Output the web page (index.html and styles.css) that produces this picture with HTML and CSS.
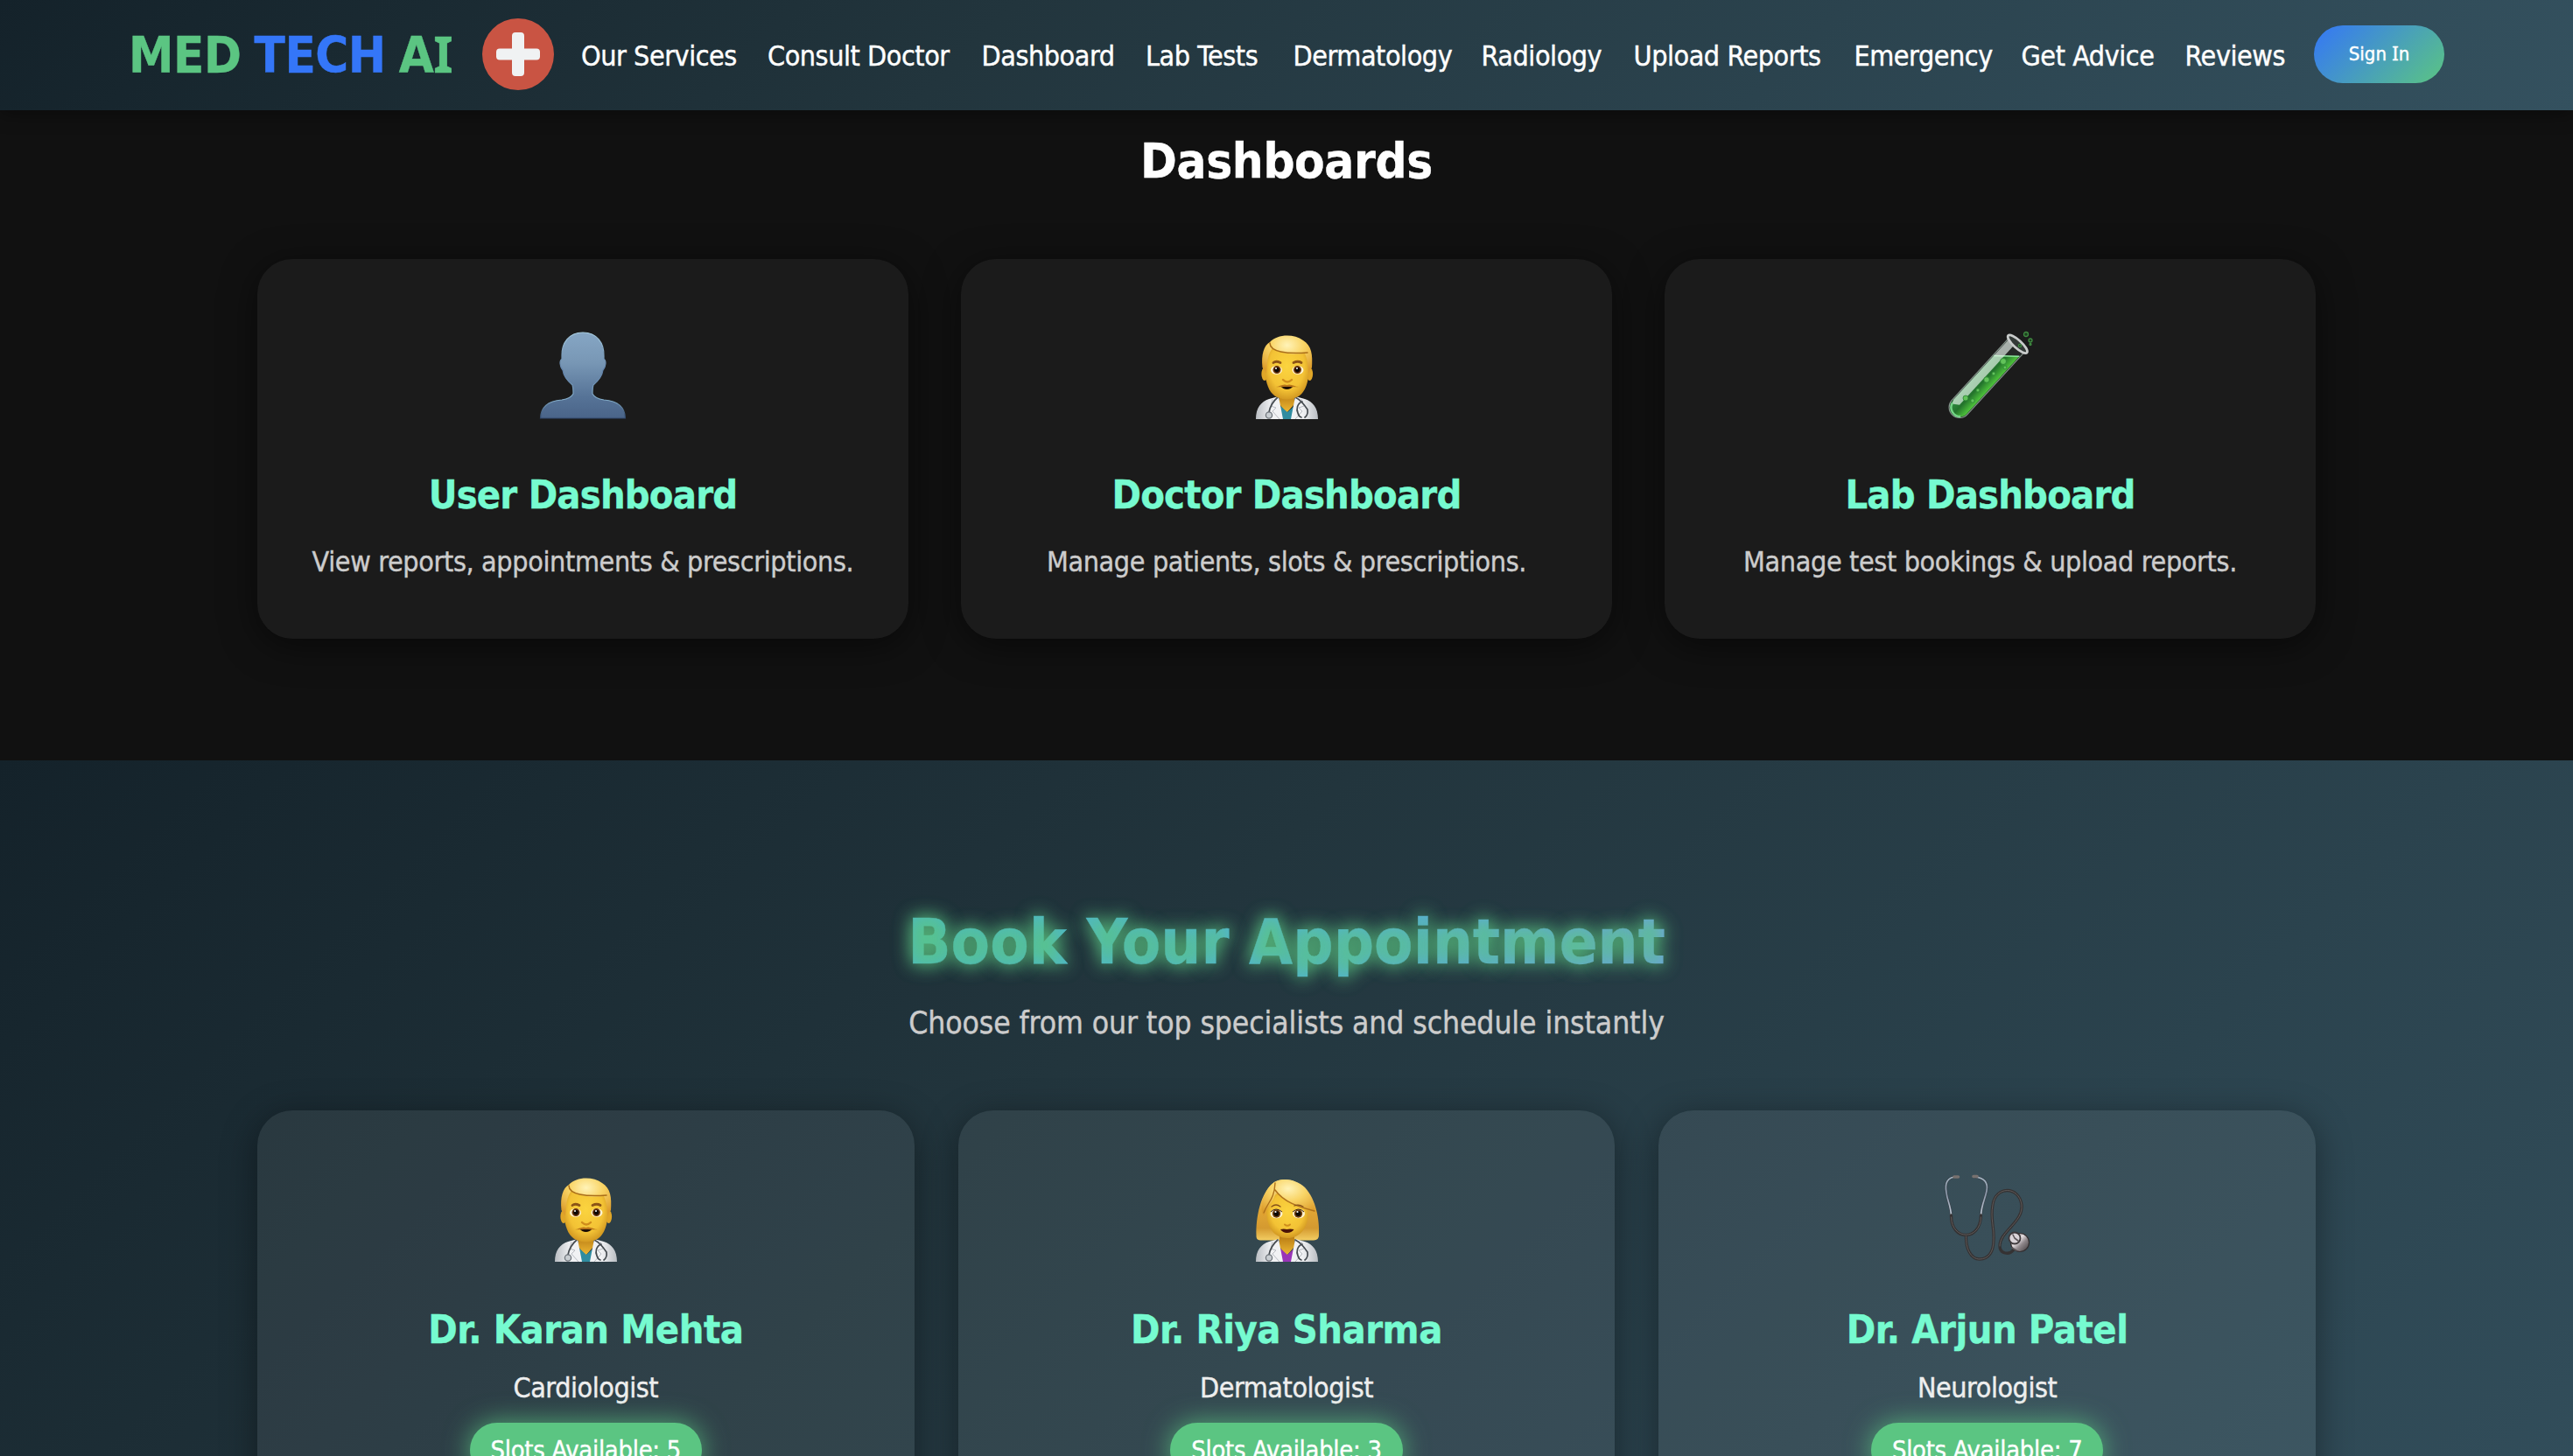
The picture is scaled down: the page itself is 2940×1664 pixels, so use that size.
FILE: index.html
```
<!DOCTYPE html>
<html lang="en">
<head>
<meta charset="utf-8">
<title>Med Tech AI</title>
<link rel="stylesheet" href="styles.css">
</head>
<body>
<svg class="defs" width="0" height="0" aria-hidden="true">
  <defs>
    <linearGradient id="bust" x1="0" y1="0" x2="0" y2="1"><stop offset="0" stop-color="#86a6c4"/><stop offset=".35" stop-color="#7897b5"/><stop offset=".75" stop-color="#567397"/><stop offset="1" stop-color="#4a6488"/></linearGradient>
    <linearGradient id="bustRim" x1="0" y1="0" x2="0" y2="1"><stop offset="0" stop-color="#a9cfe2"/><stop offset=".45" stop-color="#5f7fa6"/><stop offset=".78" stop-color="#86b0cc"/><stop offset="1" stop-color="#2f4669"/></linearGradient>
    <radialGradient id="skin" cx=".5" cy=".45" r=".6"><stop offset="0" stop-color="#fbd43f"/><stop offset=".65" stop-color="#f3c235"/><stop offset="1" stop-color="#c98d1c"/></radialGradient>
    <radialGradient id="hair" cx=".5" cy=".25" r=".75"><stop offset="0" stop-color="#fff3b8"/><stop offset=".45" stop-color="#f9d465"/><stop offset="1" stop-color="#dd9d2c"/></radialGradient>
    <linearGradient id="bob" x1="0" y1="0" x2="0" y2="1"><stop offset="0" stop-color="#fbe08a"/><stop offset=".5" stop-color="#e2a634"/><stop offset=".8" stop-color="#d49a30"/><stop offset="1" stop-color="#f3cd62"/></linearGradient>
    <linearGradient id="neck" x1="0" y1="0" x2="0" y2="1"><stop offset="0" stop-color="#b97c14"/><stop offset="1" stop-color="#f0bb35"/></linearGradient>
    <linearGradient id="coat" gradientUnits="userSpaceOnUse" x1="15" y1="0" x2="86" y2="0"><stop offset="0" stop-color="#b9bdc2"/><stop offset=".25" stop-color="#f1f2f4"/><stop offset=".75" stop-color="#f1f2f4"/><stop offset="1" stop-color="#b9bdc2"/></linearGradient>
    <linearGradient id="liquid" x1="0" y1="0" x2="1" y2="0"><stop offset="0" stop-color="#2f8f43"/><stop offset=".5" stop-color="#23732c"/><stop offset="1" stop-color="#4fc53c"/></linearGradient>
    <linearGradient id="tubing" x1="0" y1="0" x2="0" y2="1"><stop offset="0" stop-color="#a9bac8"/><stop offset=".45" stop-color="#8d99ab"/><stop offset="1" stop-color="#c4ccd8"/></linearGradient>
    <linearGradient id="steel" x1="0" y1="0" x2="1" y2="1"><stop offset="0" stop-color="#7b7478"/><stop offset=".4" stop-color="#e3dcdf"/><stop offset=".6" stop-color="#8f878b"/><stop offset="1" stop-color="#3a3436"/></linearGradient>
    <symbol id="doctor-body" viewBox="0 0 100 100">
      <path d="M42 70H59V82L50 92L42 82Z" fill="url(#neck)"/>
      <path d="M42 83L51 91L60 83L62 99H38Z" class="shirt"/>
      <path d="M15 99C15 86 21 79 30 76L41 73L46 99ZM86 99C86 86 80 79 71 76L60 73L55 99Z" fill="url(#coat)"/>
      <path d="M34 76L32 84L38 86L34 90L42 99M67 76L70 84L64 86L68 90L60 99" fill="none" stroke="#b9bcc2" stroke-width="1"/>
      <path d="M40 74C33 80 31 86 30 91M60 74C66 77 69 81 74 88Q75 94 71 97M68 79C62 81 61 88 63 92Q64 96 67 97" fill="none" stroke="#454b50" stroke-width="1.7" stroke-linecap="round"/>
      <circle cx="30" cy="94.5" r="3.6" fill="#c9ced2" stroke="#70767c" stroke-width="1.3"/>
    </symbol>
    <symbol id="doctor-man" viewBox="0 0 100 100">
      <g class="shirt-teal"><use href="#doctor-body"/></g>
      <ellipse cx="25" cy="47.5" rx="3.6" ry="7.5" fill="#e0a628"/><ellipse cx="76.5" cy="47.5" rx="3.6" ry="7.5" fill="#e0a628"/>
      <path d="M25 30C25 14 36 8 51 8C67 8 76 16 76 32C76 54 74 76 50.500 76.500C27 76 25 54 25 30Z" fill="url(#skin)"/>
      <path d="M22.500 40C21 25 24 15 31 11C39 2 58 1 69 9C79 15 80 26 79 40L75 47C75 38 74 31 71 24C58 26 42 24 34 18C28 25 28 36 27 47Z" fill="url(#hair)"/>
      <path d="M31 12C31 22 50 25 74 23" fill="none" stroke="#a96d18" stroke-width="1.5" stroke-linecap="round"/>
      <path d="M35 34.500Q38 32 43 34.500M58 34.500Q63 32 67 34.500" fill="none" stroke="#8c5416" stroke-width="2.8" stroke-linecap="round"/>
      <g fill="#fff3d2"><ellipse cx="38.5" cy="43" rx="6.5" ry="4.8"/><ellipse cx="63" cy="43" rx="6.5" ry="4.8"/></g>
      <g fill="#6a340c"><circle cx="39" cy="42.6" r="4.5"/><circle cx="62.5" cy="42.6" r="4.5"/></g>
      <g fill="#0e0805"><circle cx="39" cy="42.6" r="2.8"/><circle cx="62.5" cy="42.6" r="2.8"/></g>
      <g fill="#fff"><circle cx="38" cy="41" r="1"/><circle cx="62" cy="41" r="1"/></g>
      <path d="M46 54Q51 59 56 54" fill="none" stroke="#cf8d1c" stroke-width="2.4" stroke-linecap="round"/>
      <path d="M43 61Q50 63 58 61Q55 65 50.500 65Q46 65 43 61Z" fill="#1b0d05"/>
      <path d="M38 62C42 62 46 58 50.500 60C55 58 59 62 64 62C59 63 55 61.500 50.500 62C46 61.500 42 63 38 62Z" fill="#b8741a"/>
    </symbol>
    <symbol id="doctor-woman" viewBox="0 0 100 100">
      <path d="M36 8C46 2 62 5 71 14C84 28 88 52 87 69Q87 74 81 74.500H20Q15 74 15.500 69C15 48 20 20 36 8Z" fill="url(#bob)"/>
      <g class="shirt-purple"><use href="#doctor-body"/></g>
      <path d="M27 40C29 28 40 17 51 17C64 19 74 30 75 42C75 62 64 72 51 72C36 72 27 60 27 40Z" fill="url(#skin)"/>
      <path d="M36 8C48 1 66 7 74 19C80 28 83 36 82 42C66 38 47 32 37 17C38 28 29 34 24 47C18 38 24 16 36 8Z" fill="url(#hair)"/>
      <path d="M37 9C36 28 29 30 24 43M37 17C47 31 63 36 82 41" fill="none" stroke="#ae711b" stroke-width="1.4" stroke-linecap="round"/>
      <path d="M33 36Q38 32 43 36M59 35Q64 33 69 36" fill="none" stroke="#84501a" stroke-width="1.3" stroke-linecap="round"/>
      <g fill="#fff3d2"><ellipse cx="38.5" cy="44" rx="7" ry="5.3"/><ellipse cx="64" cy="44" rx="7" ry="5.3"/></g>
      <g fill="#71400f"><circle cx="38.5" cy="44" r="4.7"/><circle cx="63.5" cy="44" r="4.7"/></g>
      <g fill="#0e0805"><circle cx="38.5" cy="44" r="3"/><circle cx="63.5" cy="44" r="3"/></g>
      <path d="M32 42Q38 36 45 42M57 42Q64 36 70 42" fill="none" stroke="#3c220e" stroke-width="1"/>
      <g fill="#fff"><circle cx="37.5" cy="42" r="1.1"/><circle cx="62.5" cy="42" r="1.1"/></g>
      <path d="M48 56.500Q51 59 54 56.500" fill="none" stroke="#cf8d1c" stroke-width="2" stroke-linecap="round"/>
      <path d="M43 62Q47 61 50.500 62Q54 61 58.500 62Q56 66 50.500 66Q46 66 43 62Z" fill="#4a1308"/>
    </symbol>
  </defs>
</svg>

<header class="navbar">
  <div class="brand">
    <span class="brand-name">MED <span class="brand-tech">TECH</span> A<span class="serif-i">I</span></span>
    <svg class="brand-mark" viewBox="0 0 82 82" aria-hidden="true">
      <circle cx="41" cy="41" r="41" fill="#c95443"/>
      <path d="M38 16h6a4 4 0 0 1 4 4v14.500h14a4 4 0 0 1 4 4v5a4 4 0 0 1-4 4H48v14.500a4 4 0 0 1-4 4h-6a4 4 0 0 1-4-4V47.500H20a4 4 0 0 1-4-4v-5a4 4 0 0 1 4-4h14V20a4 4 0 0 1 4-4z" fill="#f0f2f3"/>
    </svg>
  </div>
  <nav class="links">
    <a>Our Services</a><a>Consult Doctor</a><a>Dashboard</a><a>Lab Tests</a><a>Dermatology</a><a>Radiology</a><a>Upload Reports</a><a>Emergency</a><a>Get Advice</a><a>Reviews</a>
  </nav>
  <button class="sign-in">Sign <span class="serif-i">I</span>n</button>
</header>

<section class="dashboards">
  <h2 class="section-title">Dashboards</h2>
  <div class="dash-grid">
    <article class="dash-card">
      <svg class="icon" viewBox="0 0 100 100">
        <path d="M50 0C66 0 74.500 12 74 27V30.500C77 32 76.500 39 73 43C72 50 68 55 62 60C61 63 61 66 61 70C63 74 68 76 74 77C88 78 98 84 98.500 98H1.500C2 84 12 78 26 77C32 76 37 74 39 70C39 66 39 63 38 60C32 55 28 50 27 43C23.500 39 23 32 26 30.500V27C25.500 12 34 0 50 0Z" fill="url(#bust)" stroke="url(#bustRim)" stroke-width="1.2"/>
      </svg>
      <h3>User Dashboard</h3>
      <p>View reports, appointments &amp; prescriptions.</p>
    </article>
    <article class="dash-card">
      <svg class="icon"><use href="#doctor-man"/></svg>
      <h3>Doctor Dashboard</h3>
      <p>Manage patients, slots &amp; prescriptions.</p>
    </article>
    <article class="dash-card">
      <svg class="icon" viewBox="0 0 100 100">
        <g transform="translate(82 12.500) rotate(42.500)">
          <path d="M-12 0V99A12 12 0 0 0 12 99V0Z" fill="#242826" stroke="#83928a" stroke-width="1.2"/>
          <path d="M-11 29L11 10V99A11 11 0 0 1-11 99Z" fill="url(#liquid)"/>
          <path d="M-11 29L11 10" stroke="#8feaa0" stroke-width="1.5"/>
          <path d="M-11 3H-2V97L-9 102L-11 97Z" fill="#e6f2ea" opacity=".68"/>
          <path d="M-9.500 101A10.500 10.500 0 0 0 8 106" fill="none" stroke="#74d486" stroke-width="2.5"/>
          <ellipse cx="0" cy="1" rx="14.500" ry="4.500" fill="#333a37" stroke="#c9cccb" stroke-width="2.8"/>
        </g>
        <g fill="#62c35a" stroke="#2a8432" stroke-width=".8"><circle cx="65" cy="33" r="3.5"/><circle cx="67" cy="40" r="2"/><circle cx="54" cy="47" r="2"/><circle cx="46" cy="54" r="3.2"/><circle cx="36" cy="66" r="2"/><circle cx="22" cy="75" r="3"/><circle cx="30" cy="78" r="2.2"/></g>
        <g fill="#1d3f20" stroke="#3f8a40" stroke-width="1.3"><circle cx="91" cy="2" r="2.5"/><circle cx="96" cy="9" r="2"/><circle cx="96" cy="13.5" r="1"/><circle cx="84" cy="15" r="1.6"/></g>
      </svg>
      <h3>Lab Dashboard</h3>
      <p>Manage test bookings &amp; upload reports.</p>
    </article>
  </div>
</section>

<section class="booking">
  <h2 class="booking-title">Book Your Appointment</h2>
  <p class="booking-sub">Choose from our top specialists and schedule instantly</p>
  <div class="doctor-grid">
    <article class="doctor-card">
      <svg class="icon"><use href="#doctor-man"/></svg>
      <h3>Dr. Karan Mehta</h3>
      <p>Cardiologist</p>
      <span class="slots">Slots Available: 5</span>
    </article>
    <article class="doctor-card">
      <svg class="icon"><use href="#doctor-woman"/></svg>
      <h3>Dr. Riya Sharma</h3>
      <p>Dermatologist</p>
      <span class="slots">Slots Available: 3</span>
    </article>
    <article class="doctor-card">
      <svg class="icon stethoscope" viewBox="0 0 100 100" fill="none" stroke-linecap="round">
        <path d="M16 2C5 2 2 9 4 20C5 29 9 35 9.500 46M36 2C47 3 52 8 50 18C48 28 44 34 43.500 46" stroke="#39434c" stroke-width="3"/>
        <path d="M16 2C5 2 2 9 4 20C5 29 9 35 9.500 46M36 2C47 3 52 8 50 18C48 28 44 34 43.500 46" stroke="url(#tubing)" stroke-width="1.6"/>
        <path d="M13 2H17.500M35 1.500H39" stroke="#77716f" stroke-width="3.6"/>
        <path d="M9.500 46C9 76 43 76 43.500 46M26.500 69C26 84 32 96 42 96C52 96 58 88 58 74C59 60 54 50 57 34C60 12 87 12 90 34C92 54 65 64 65 81C65 90 76 92 81 85" stroke="#353233" stroke-width="3.3"/>
        <path d="M9.500 48C10 75 43 75 43.500 48M26.500 70C26 84 32 96 42 96C52 96 58 88 58 74C59 60 54 50 57 34C60 12 87 12 90 34C92 54 65 64 65 81" stroke="#625d5c" stroke-width=".9"/>
        <circle cx="88" cy="77" r="10.500" fill="url(#steel)" stroke="#332e30" stroke-width="1.2"/>
        <circle cx="82" cy="72" r="6.500" fill="#d9d3d8" stroke="#3d383b" stroke-width="1.8"/>
        <path d="M82 72L80 68M82 72L86 75M79 83L84 86" stroke="#5d565a" stroke-width="1.6"/>
      </svg>
      <h3>Dr. Arjun Patel</h3>
      <p>Neurologist</p>
      <span class="slots">Slots Available: 7</span>
    </article>
  </div>
</section>
</body>
</html>
```
FILE: styles.css
```
* { box-sizing: border-box; margin: 0; padding: 0; }

html, body { height: 1664px; overflow: hidden; }

body {
  background: #111;
  color: #fff;
  font-family: "DejaVu Sans Condensed", "DejaVu Sans", sans-serif;
  -webkit-text-stroke: .4px currentColor;
}

.defs { position: absolute; }

.serif-i { font-family: "Noto Sans", sans-serif; line-height: 0; }

/* Navigation bar */
.navbar {
  position: relative;
  z-index: 2;
  display: flex;
  align-items: center;
  height: 126px;
  padding: 0 147px 2px 146px;
  background: linear-gradient(135deg, #14222a, #22353d 38%, #34515f);
  box-shadow: 0 4px 20px rgba(0, 0, 0, .4);
}

.brand { display: flex; align-items: center; width: 518px; }

.brand-name {
  width: 405px;
  padding: 4px 0 0 1px;
  color: #5bc582;
  font-size: 57.6px;
  font-weight: 700;
  letter-spacing: -.5px;
  line-height: 70px;
  white-space: nowrap;
  word-spacing: -2.5px;
}

.brand-tech { color: #3476f8; }

.brand-mark { flex: none; width: 82px; height: 82px; }

.links {
  display: grid;
  grid-template-columns: 213px 244.5px 187.5px 168.5px 215px 174px 252px 191px 187px 147.5px;
  padding-top: 3px;
  font-size: 32px;
  letter-spacing: -.45px;
  line-height: 40px;
  white-space: nowrap;
}

.links a { text-decoration: none; }

.sign-in {
  width: 149px;
  height: 66px;
  border: 0;
  border-radius: 40px;
  background: linear-gradient(135deg, #3476f8, #5bc582);
  color: #fff;
  font: 22px/30px "DejaVu Sans Condensed", "DejaVu Sans", sans-serif;
}

/* Dashboards */
.dashboards {
  height: 743px;
  padding: 26px 294px 0;
  background: #111;
  text-align: center;
}

.section-title { font-size: 56px; letter-spacing: -.35px; line-height: 64px; }

.dash-grid {
  display: grid;
  grid-template-columns: repeat(3, 1fr);
  gap: 60px;
  margin-top: 80px;
}

.dash-card {
  height: 434px;
  padding-top: 84px;
  border-radius: 40px;
  background: #1b1b1b;
  box-shadow: 0 8px 40px rgba(0, 0, 0, .5);
}

.icon { display: block; width: 100px; height: 100px; margin: 0 auto; overflow: visible; }

.stethoscope { transform: translateX(-1px); }

.shirt { fill: currentColor; }
.shirt-teal { color: #2f8ca0; }
.shirt-purple { color: #9a35b8; }

.dash-card h3,
.doctor-card h3 {
  color: #76fbd0;
  font-size: 44.8px;
  letter-spacing: -.8px;
  line-height: 54px;
}

.dash-card h3 { margin-top: 59px; }

.dash-card p {
  margin-top: 29px;
  color: #ccc;
  font-size: 32px;
  letter-spacing: -.36px;
  line-height: 40px;
}

/* Appointment booking */
.booking {
  height: 795px;
  padding: 165px 294px 0;
  background: linear-gradient(135deg, #14222a, #22353d 38%, #34515f) 0 0 / 100% 1160px no-repeat;
  text-align: center;
}

.booking-title {
  width: 866px;
  margin: 0 auto;
  background: linear-gradient(90deg, #4bb8c8, #52b0dc 55%, #6e9ee4);
  -webkit-background-clip: text;
  background-clip: text;
  color: transparent;
  font-size: 72px;
  letter-spacing: .05px;
  line-height: 84px;
  text-shadow: 0 0 20px #5bc582, 0 0 24px rgba(91, 197, 130, .45);
  white-space: nowrap;
}

.booking-sub {
  margin-top: 30px;
  color: #ccc;
  font-size: 35.2px;
  letter-spacing: -.09px;
  line-height: 42px;
}

.doctor-grid {
  display: grid;
  grid-template-columns: repeat(3, 1fr);
  gap: 50px;
  margin-top: 79px;
}

.doctor-card {
  height: 560px;
  padding-top: 74px;
  border-radius: 40px;
  background: rgba(255, 255, 255, .065);
  box-shadow: 0 8px 40px rgba(0, 0, 0, .4);
}

.doctor-card h3 { margin-top: 50px; letter-spacing: -.45px; }

.doctor-card p {
  margin-top: 19px;
  color: #eee;
  font-size: 32px;
  letter-spacing: -.45px;
  line-height: 40px;
}

.slots {
  display: inline-block;
  margin-top: 20px;
  padding: 0 24px;
  border-radius: 40px;
  background: #5bc582;
  box-shadow: 0 0 30px rgba(91, 197, 130, .8);
  font-size: 28.8px;
  letter-spacing: -.25px;
  line-height: 62px;
}
```
